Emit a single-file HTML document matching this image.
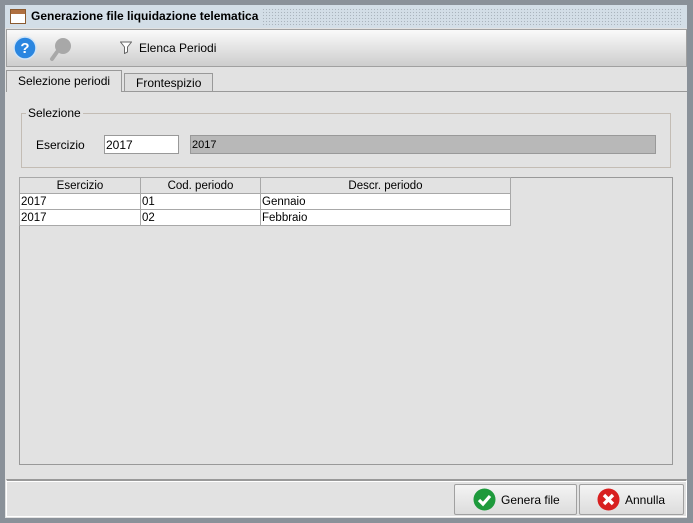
<!DOCTYPE html>
<html><head><style>
*{box-sizing:border-box;margin:0;padding:0}
body{width:693px;height:523px;background:#8a9199;position:relative;overflow:hidden;font-family:"Liberation Sans",sans-serif;font-size:12px;color:#000}
.a{position:absolute}
.win{left:5px;top:5px;width:682px;height:513px;background:#e2e2e2}
.title{left:5px;top:5px;width:682px;height:23px;background:#d3dee7}
.dots{left:262px;top:8px;width:420px;height:17px;background-image:radial-gradient(#aab4bd 0.6px,transparent 0.8px);background-size:3px 3px}
.tb{left:6px;top:29px;width:681px;height:38px;background:linear-gradient(#fafafa,#cdcdcd);border:1px solid #a0a0a0}
.tab{height:21px;border:1px solid #999;border-bottom:none;background:#ddd;padding:3px 11px 0;font-size:12px}
.panel{left:6px;top:91px;width:681px;height:386px;border-top:1px solid #999;background:#e2e2e2}
td,th{border:1px solid #a8a8a8;height:16px;font-size:11.5px;padding:0 1px;font-weight:normal}
table{border-collapse:collapse;position:absolute;left:19px;top:177px;background:#fff}
th{background:#e2e2e2;text-align:center}
.btn{height:31px;border:1px solid #a0a0a0;border-radius:2px;background:linear-gradient(#f4f4f4,#dcdcdc);font-size:12px;display:flex;align-items:center}
</style></head><body>
<div class="a win"></div>
<div class="a title"></div>
<div class="a dots"></div>
<svg class="a" style="left:10px;top:9px" width="16" height="15"><rect x="0.5" y="0.5" width="15" height="14" fill="#fff" stroke="#8a5a30"/><rect x="1" y="1" width="14" height="4" fill="#b07040"/></svg>
<div class="a" style="left:31px;top:9px;font-weight:bold;font-size:12px">Generazione file liquidazione telematica</div>
<div class="a tb"></div>
<svg class="a" style="left:13px;top:36px" width="24" height="24"><circle cx="12" cy="12" r="11" fill="#2a86e0" stroke="#cfe4f8" stroke-width="1.5"/><text x="12" y="17" text-anchor="middle" font-family="Liberation Sans" font-weight="bold" font-size="15" fill="#fff">?</text></svg>
<svg class="a" style="left:49px;top:36px" width="24" height="26"><circle cx="14" cy="10" r="8" fill="#a8a8a8"/><line x1="8" y1="16" x2="3" y2="23" stroke="#a8a8a8" stroke-width="4" stroke-linecap="round"/></svg>
<svg class="a" style="left:120px;top:41px" width="12" height="13"><path d="M0.5 1h11l-4 5v5l-3 1.5v-6.5z" fill="#fff" stroke="#666"/></svg>
<div class="a" style="left:139px;top:41px">Elenca Periodi</div>
<div class="a tab" style="left:6px;top:70px;height:22px;background:#e2e2e2;z-index:2">Selezione periodi</div>
<div class="a tab" style="left:124px;top:73px;height:18px;padding-top:2px">Frontespizio</div>
<div class="a panel"></div>
<div class="a" style="left:21px;top:113px;width:650px;height:55px;border:1px solid #c3bcb4"></div>
<div class="a" style="left:26px;top:106px;background:#e2e2e2;padding:0 2px">Selezione</div>
<div class="a" style="left:36px;top:138px">Esercizio</div>
<div class="a" style="left:104px;top:135px;width:75px;height:19px;background:#fff;border:1px solid #999;padding:2px 1px">2017</div>
<div class="a" style="left:190px;top:135px;width:466px;height:19px;background:#b8b8b8;border:1px solid #999;padding:3px 1px;font-size:11px">2017</div>
<div class="a" style="left:19px;top:177px;width:654px;height:288px;border:1px solid #999"></div>
<table><tr><th style="width:121px">Esercizio</th><th style="width:120px">Cod. periodo</th><th style="width:250px">Descr. periodo</th></tr>
<tr><td>2017</td><td>01</td><td>Gennaio</td></tr><tr><td>2017</td><td>02</td><td>Febbraio</td></tr></table>
<div class="a" style="left:6px;top:479px;width:681px;height:38px;border:1px solid #fff;border-top:2px solid #999;box-shadow:inset 0 1px 0 #fff"></div>
<div class="a btn" style="left:454px;top:484px;width:123px"><svg style="margin:0 5px 0 18px" width="23" height="23"><circle cx="11.5" cy="11.5" r="11" fill="#1e9a3c"/><path d="M6 12l4 4 7-8" stroke="#fff" stroke-width="3.2" fill="none"/></svg>Genera file</div>
<div class="a btn" style="left:579px;top:484px;width:105px"><svg style="margin:0 5px 0 17px" width="23" height="23"><circle cx="11.5" cy="11.5" r="11" fill="#d82020"/><path d="M7 7l9 9M16 7l-9 9" stroke="#fff" stroke-width="3.4"/></svg>Annulla</div>
</body></html>
